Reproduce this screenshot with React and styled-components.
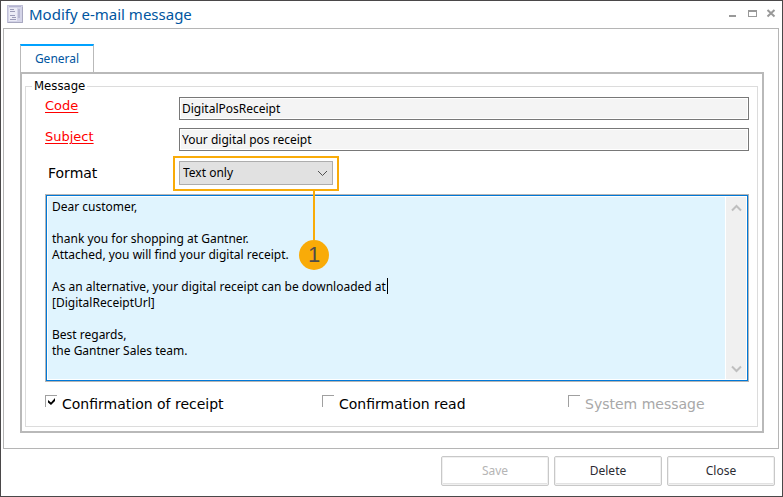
import React from "react";
import styled, { createGlobalStyle } from "styled-components";

const ui = '"Noto Sans", "Open Sans", sans-serif';
const wide = '"DejaVu Sans", sans-serif';
const orange = "#f9ab08";

const Global = createGlobalStyle`
  *, *::before, *::after { box-sizing: border-box; }
  body { margin: 0; background: #fff; }
  button, input, select, textarea { font: inherit; color: inherit; margin: 0; border-radius: 0; }
`;

const Dialog = styled.main`
  display: flex;
  flex-direction: column;
  min-height: 100vh;
  padding: 0 3px 0 2px;
  border: 1px solid #4a4849;
  background: #fff;
  color: #000;
  font: 12px/16px ${ui};
`;

const TitleBar = styled.header`
  display: flex;
  align-items: center;
  gap: 6px;
  height: 27px;
  padding: 0 2px 2px 4px;
`;

const Title = styled.h1`
  flex: 1;
  margin: 0;
  color: #0055a0;
  font-size: 15px;
  line-height: 20px;
  font-weight: 400;
`;

const WindowButtons = styled.div`
  display: flex;
  gap: 8px;
`;

const WindowButton = styled.button`
  display: flex;
  padding: 0;
  border: 0;
  background: none;
`;

const Panel = styled.section`
  flex: 1;
  display: flex;
  flex-direction: column;
  padding: 15px 14px 15px 16px;
  border: 1px solid #b5b5b5;
`;

const TabList = styled.div`
  display: flex;
`;

const Tab = styled.button`
  width: 74px;
  height: 28px;
  padding: 0;
  border: 1px solid #b9b9b9;
  border-top: 2px solid #00a2ff;
  border-bottom: 0;
  background: #fff;
  color: #0055a0;
`;

const TabPane = styled.div`
  flex: 1;
  display: flex;
  flex-direction: column;
  padding: 3px 4px 4px 3px;
  border: 2px solid #b9b9b9;
`;

const Group = styled.fieldset`
  flex: 1;
  margin: 0;
  min-width: 0;
  padding: 2px 8px 12px 19px;
  border: 1px solid #dcdcdc;
`;

const Legend = styled.legend`
  margin-left: -13px;
  padding: 0 2px;
  font: 13px/18px "DejaVu Sans Condensed", ${ui};
`;

const Form = styled.div`
  display: grid;
  grid-template-columns: 134px 1fr;
  row-gap: 8px;
`;

const RequiredLink = styled.a`
  color: #ff0000;
  font: 13px/18px ${wide};
  text-underline-offset: 2px;
`;

const FormatLabel = styled.label`
  align-self: center;
  padding: 2px 0 0 3px;
  font: 14px/18px ${wide};
`;

const TextField = styled.input`
  width: 100%;
  height: 23px;
  padding: 0 2px;
  border: 1px solid #787878;
  background: #f4f4f4;
  box-shadow: inset 0 0 0 1px #fff;
`;

const SelectWrap = styled.div`
  position: relative;
  width: 154px;
  margin-top: 2px;
`;

const Select = styled.select`
  display: block;
  appearance: none;
  width: 100%;
  height: 24px;
  padding: 0 24px 0 3px;
  border: 1px solid #adadad;
  background: #e1e1e1;
`;

const SelectArrow = styled.svg`
  position: absolute;
  right: 5px;
  top: 9px;
  pointer-events: none;
`;

const Highlight = styled.div`
  position: absolute;
  inset: -5px -6px -6px;
  border: 2px solid ${orange};
  pointer-events: none;
`;

const Callout = styled.div`
  position: absolute;
  z-index: 1;
  top: 29px;
  left: 120px;
  display: flex;
  flex-direction: column;
  align-items: center;
  pointer-events: none;
`;

const CalloutLine = styled.div`
  width: 2px;
  height: 50px;
  background: ${orange};
`;

const CalloutNumber = styled.span`
  width: 30px;
  height: 30px;
  border-radius: 50%;
  background: ${orange};
  color: #4f4b48;
  font: 22px/30px "Liberation Sans", Arial, sans-serif;
  text-align: center;
`;

const Editor = styled.div`
  position: relative;
  display: flex;
  margin: 10px 1px 0;
  padding: 1px;
  border: 1px solid #0078d7;
  box-shadow: 0 0 0 1px #b5b5b5;
  background: #fff;
`;

const EditorText = styled.textarea`
  display: block;
  flex: 1;
  min-width: 0;
  padding: 2px 4px 4px;
  border: 0;
  outline: 0;
  resize: none;
  overflow: hidden;
  background: #e0f4fe;
  line-height: 16px;
`;

const Caret = styled.span`
  position: absolute;
  top: 82px;
  left: 340px;
  width: 1px;
  height: 16px;
  background: #000;
`;

const ScrollBar = styled.div`
  display: flex;
  flex-direction: column;
  justify-content: space-between;
  width: 20px;
  margin-left: 1px;
  background: #f0f0f0;
`;

const ScrollButton = styled.button`
  display: grid;
  place-items: center;
  height: 21px;
  padding: 0;
  border: 0;
  background: none;
`;

const Checks = styled.div`
  display: grid;
  grid-template-columns: 277px 246px 1fr;
  margin-top: 14px;
`;

const Check = styled.label`
  display: flex;
  align-items: flex-start;
  gap: 5px;
  color: ${(p) => (p.$disabled ? "#a8a8a8" : "#000")};
  font: 14px/18px ${wide};
`;

const CheckBox = styled.input`
  appearance: none;
  width: 12px;
  height: 12px;
  border: solid #a0a0a0;
  border-width: 1px 0 0 1px;
`;

const CheckFrame = styled.span`
  position: relative;
  display: flex;
  width: 12px;
  height: 12px;
`;

const Tick = styled.svg`
  position: absolute;
  left: 3px;
  top: 3px;
  pointer-events: none;
`;

const Footer = styled.footer`
  display: flex;
  justify-content: flex-end;
  gap: 5px;
  padding: 7px 4px 10px;
`;

const Button = styled.button`
  width: 108px;
  height: 30px;
  padding: 0;
  border: 1px solid #c8c8c8;
  border-radius: 2px;
  background: #fff;
  box-shadow: inset 0 0 0 1px #f0f0f0, inset 0 -2px 0 #e2e2e2;
  color: #2b2b33;
  &:disabled { color: #b5b5b5; }
`;

const message = `Dear customer,

thank you for shopping at Gantner.
Attached, you will find your digital receipt.

As an alternative, your digital receipt can be downloaded at
[DigitalReceiptUrl]

Best regards,
the Gantner Sales team.`;

function FormIcon() {
  return (
    <svg width="16" height="18" viewBox="0 0 16 18" aria-hidden="true">
      <rect x="0.5" y="0.5" width="15" height="17" fill="#d4d4e8" stroke="#c0c0d8" />
      <path d="M1 17.500h14.500V2" fill="none" stroke="#a8a8c0" />
      <path d="M2 1.500h12" stroke="#b4b4d0" />
      <rect x="2" y="3" width="8" height="13" fill="#ececf6" />
      <path d="M3 4.500h4M3 6.500h5M3 10.500h5M5 12.500h4M3 14.500h6" stroke="#9c9cb8" />
      <rect x="11" y="4" width="2" height="9" fill="#b8b8d2" />
    </svg>
  );
}

function CheckItem({ children, disabled, defaultChecked }) {
  return (
    <Check $disabled={disabled}>
      <CheckFrame>
        <CheckBox type="checkbox" disabled={disabled} defaultChecked={defaultChecked} />
        {defaultChecked && (
          <Tick width="8" height="7" viewBox="0 0 8 7" aria-hidden="true">
            <path d="M0 2l3 2.500L7 0v3L3 7 0 4.500z" fill="#000" />
          </Tick>
        )}
      </CheckFrame>
      {children}
    </Check>
  );
}

export default function App() {
  return (
    <Dialog>
      <Global />
      <TitleBar>
        <FormIcon />
        <Title>Modify e-mail message</Title>
        <WindowButtons>
          <WindowButton aria-label="Minimize">
            <svg width="11" height="10" viewBox="0 0 11 10"><path d="M1 6h7v2H1z" fill="#999" /></svg>
          </WindowButton>
          <WindowButton aria-label="Maximize">
            <svg width="11" height="10" viewBox="0 0 11 10"><path d="M1 1h9v7H1zM2 3v4h7V3z" fill="#999" fillRule="evenodd" /></svg>
          </WindowButton>
          <WindowButton aria-label="Close window">
            <svg width="11" height="10" viewBox="0 0 11 10"><path d="M1.500 1l7 6.500M8.500 1l-7 6.500" fill="none" stroke="#999" strokeWidth="2" /></svg>
          </WindowButton>
        </WindowButtons>
      </TitleBar>
      <Panel>
        <TabList role="tablist">
          <Tab role="tab" aria-selected="true">General</Tab>
        </TabList>
        <TabPane role="tabpanel">
          <Group>
            <Legend>Message</Legend>
            <Form>
              <RequiredLink href="#code" id="code-label">Code</RequiredLink>
              <TextField id="code" aria-labelledby="code-label" defaultValue="DigitalPosReceipt" />
              <RequiredLink href="#subject" id="subject-label">Subject</RequiredLink>
              <TextField id="subject" aria-labelledby="subject-label" defaultValue="Your digital pos receipt" />
              <FormatLabel htmlFor="format">Format</FormatLabel>
              <SelectWrap>
                <Select id="format" defaultValue="text">
                  <option value="text">Text only</option>
                </Select>
                <SelectArrow width="11" height="7" viewBox="0 0 11 7" aria-hidden="true">
                  <path d="M1 1l4.500 4.500L10 1" fill="none" stroke="#505050" />
                </SelectArrow>
                <Highlight />
                <Callout>
                  <CalloutLine />
                  <CalloutNumber>1</CalloutNumber>
                </Callout>
              </SelectWrap>
            </Form>
            <Editor>
              <EditorText rows={11} aria-label="Message text" defaultValue={message} spellCheck={false} />
              <Caret />
              <ScrollBar>
                <ScrollButton aria-label="Scroll up">
                  <svg width="11" height="8" viewBox="0 0 11 8"><path d="M1 6.500L5.500 2 10 6.500" fill="none" stroke="#bfbfbf" strokeWidth="2" /></svg>
                </ScrollButton>
                <ScrollButton aria-label="Scroll down">
                  <svg width="11" height="8" viewBox="0 0 11 8"><path d="M1 1.500L5.500 6 10 1.500" fill="none" stroke="#bfbfbf" strokeWidth="2" /></svg>
                </ScrollButton>
              </ScrollBar>
            </Editor>
            <Checks>
              <CheckItem defaultChecked>Confirmation of receipt</CheckItem>
              <CheckItem>Confirmation read</CheckItem>
              <CheckItem disabled>System message</CheckItem>
            </Checks>
          </Group>
        </TabPane>
      </Panel>
      <Footer>
        <Button disabled>Save</Button>
        <Button>Delete</Button>
        <Button>Close</Button>
      </Footer>
    </Dialog>
  );
}
